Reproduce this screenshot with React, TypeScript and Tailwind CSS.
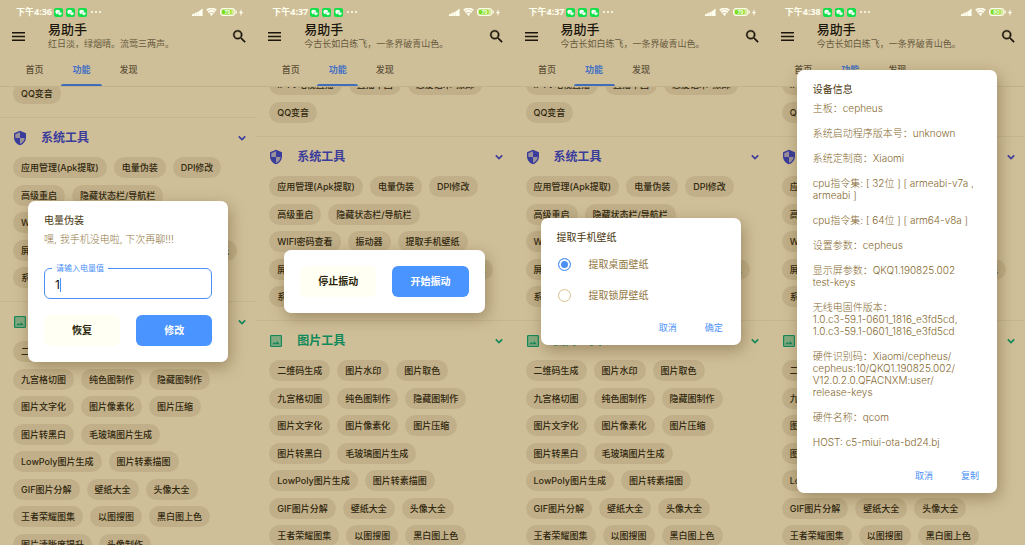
import type { ReactNode } from "react";

type Section = {
  title: string;
  tone: string;
  icon: ReactNode;
  rows: string[][];
};

const ShieldIcon = () => (
  <svg viewBox="0 0 24 24" className="size-4" fill="currentColor" aria-hidden="true">
    <path d="M12 2 4 5v6.1c0 5.05 3.41 9.76 8 10.9 4.59-1.14 8-5.85 8-10.9V5l-8-3z" opacity=".35" />
    <path d="M12 1 3 5v6c0 5.55 3.84 10.74 9 12 5.16-1.26 9-6.45 9-12V5l-9-4zm0 10.99h7c-.53 4.12-3.28 7.79-7 8.94V12H5V6.3l7-3.11v8.8z" />
  </svg>
);

const PictureIcon = () => (
  <svg viewBox="0 0 24 24" className="size-4" fill="currentColor" aria-hidden="true">
    <path d="M5 19h14V5H5v14z" opacity=".4" />
    <path d="M19 3H5a2 2 0 0 0-2 2v14a2 2 0 0 0 2 2h14a2 2 0 0 0 2-2V5a2 2 0 0 0-2-2zm0 16H5V5h14v14zm-5.04-6.71-2.75 3.54-1.96-2.36L6.5 17h11l-3.54-4.71z" />
  </svg>
);

const voiceRows = [["IPTV电视直播", "直播中国", "恋爱话术-撩妹"], ["QQ变音"]];

const sections: Section[] = [
  {
    title: "系统工具",
    tone: "text-[#3a3c9c]",
    icon: <ShieldIcon />,
    rows: [
      ["应用管理(Apk提取)", "电量伪装", "DPI修改"],
      ["高级重启", "隐藏状态栏/导航栏"],
      ["WIFI密码查看", "振动器", "提取手机壁纸"],
      ["屏幕坏点检测", "设备信息", "提取应用动态壁纸"],
      ["系统界面调节"],
    ],
  },
  {
    title: "图片工具",
    tone: "text-[#12895a]",
    icon: <PictureIcon />,
    rows: [
      ["二维码生成", "图片水印", "图片取色"],
      ["九宫格切图", "纯色图制作", "隐藏图制作"],
      ["图片文字化", "图片像素化", "图片压缩"],
      ["图片转黑白", "毛玻璃图片生成"],
      ["LowPoly图片生成", "图片转素描图"],
      ["GIF图片分解", "壁纸大全", "头像大全"],
      ["王者荣耀图集", "以图搜图", "黑白图上色"],
      ["图片清晰度提升", "头像制作"],
    ],
  },
];

const deviceInfo: string[][] = [
  ["主板：cepheus"],
  ["系统启动程序版本号：unknown"],
  ["系统定制商：Xiaomi"],
  ["cpu指令集: [ 32位 ] [ armeabi-v7a ,", "armeabi ]"],
  ["cpu指令集: [ 64位 ] [ arm64-v8a ]"],
  ["设置参数：cepheus"],
  ["显示屏参数：QKQ1.190825.002", "test-keys"],
  ["无线电固件版本：", "1.0.c3-59.1-0601_1816_e3fd5cd,", "1.0.c3-59.1-0601_1816_e3fd5cd"],
  ["硬件识别码：Xiaomi/cepheus/", "cepheus:10/QKQ1.190825.002/", "V12.0.2.0.QFACNXM:user/", "release-keys"],
  ["硬件名称：qcom"],
  ["HOST: c5-miui-ota-bd24.bj"],
];

const ChatIcon = () => (
  <svg viewBox="0 0 18 18" className="size-[9px]" aria-hidden="true">
    <rect width="18" height="18" rx="4" fill="#12e04a" />
    <ellipse cx="7.3" cy="7.4" rx="4.8" ry="4" fill="#fff" />
    <path d="M4.5 10 4 12.5l3-1.4z" fill="#fff" />
    <ellipse cx="11.8" cy="11.2" rx="4" ry="3.3" fill="#fff" stroke="#12e04a" strokeWidth=".8" />
  </svg>
);

function StatusBar({ time, charge }: { time: string; charge: string }) {
  return (
    <div className="flex h-6 items-center pr-[13px] pl-4 text-[#fffff0]">
      <span className="font-['Noto_Sans','Noto_Sans_CJK_SC',sans-serif] text-[9px] leading-3 font-bold">{time}</span>
      <span className="ml-0.5 flex gap-[3px]">
        <ChatIcon />
        <ChatIcon />
        <ChatIcon />
      </span>
      <svg viewBox="0 0 10 2" className="ml-1 h-[2px] w-[10px]" fill="currentColor" aria-hidden="true">
        <circle cx="1" cy="1" r="1" />
        <circle cx="5" cy="1" r="1" />
        <circle cx="9" cy="1" r="1" />
      </svg>
      <svg viewBox="0 0 11 8" className="ml-auto h-2 w-[11px]" fill="currentColor" aria-hidden="true">
        <path d="M0 8V6.4L2 5.6V8zM2.2 8V5.5l2-.9V8zM4.4 8V4.5l2-1V8zM6.6 8V3.4L10.6.5V8z" />
      </svg>
      <svg viewBox="0 0 24 18" className="ml-[3px] h-2 w-[11px]" fill="currentColor" aria-hidden="true">
        <path d="M12 18 7.5 12.5a7 7 0 0 1 9 0zM6.2 11 3.4 7.6a13 13 0 0 1 17.2 0L17.8 11a9.6 9.6 0 0 0-11.6 0zM2.6 6.6.1 3.6a18.5 18.5 0 0 1 23.8 0l-2.5 3a15.2 15.2 0 0 0-18.8 0z" />
      </svg>
      <svg viewBox="0 0 34 16" className="ml-[3px] h-2 w-[17px]" aria-hidden="true">
        <rect x="1" y="1" width="29" height="14" rx="5" fill="#d9e8a0" stroke="#fffff0" strokeWidth="2" />
        <rect x="4" y="3.5" width="19" height="9" rx="2" fill="#7be01e" />
        <rect x="31.5" y="5" width="2" height="6" rx="1" fill="#fffff0" />
        <text x="15" y="12" fontSize="10" fontWeight="700" textAnchor="middle" fill="#fffff0">
          {charge}
        </text>
      </svg>
      <svg viewBox="0 0 8 14" className="ml-0.5 h-[7px] w-1" fill="currentColor" aria-hidden="true">
        <path d="M5.5 0 0 8h3.2L2.5 14 8 5.8H4.8z" />
      </svg>
    </div>
  );
}

function Header({ time, charge, poem }: { time: string; charge: string; poem: string }) {
  const tabs = ["首页", "功能", "发现"];
  return (
    <header className="border-b border-[#c2b28c]">
      <StatusBar time={time} charge={charge} />
      <div className="flex h-6 items-center pr-2 pl-[10px] text-[#1b160b]">
        <button type="button" aria-label="菜单">
          <svg viewBox="0 0 17 17" className="size-[17px]" fill="currentColor" aria-hidden="true">
            <path d="M2 4h13v1.6H2zM2 7.7h13v1.6H2zM2 11.4h13V13H2z" />
          </svg>
        </button>
        <div className="ml-[21px] min-w-0 flex-1">
          <h1 className="text-[13px] leading-4 font-medium">{"易助手"}</h1>
          <p className="truncate text-[9px] leading-[14px] text-[#685b3e]">{poem}</p>
        </div>
        <button type="button" aria-label="搜索">
          <svg viewBox="0 0 24 24" className="size-[17px]" fill="currentColor" aria-hidden="true">
            <path d="M15.5 14h-.79l-.28-.27A6.47 6.47 0 0 0 16 9.5 6.5 6.5 0 1 0 9.5 16c1.61 0 3.09-.59 4.23-1.57l.27.28v.79l5 4.99L20.49 19l-4.99-5zm-6 0a4.5 4.5 0 1 1 0-9 4.5 4.5 0 0 1 0 9z" stroke="currentColor" strokeWidth=".5" />
          </svg>
        </button>
      </div>
      <nav className="flex pt-2 pl-[11px]">
        {tabs.map((tab) => (
          <a
            key={tab}
            href="#"
            className={
              tab === "功能"
                ? "flex w-[47px] flex-col items-center text-[9px] font-semibold text-[#3f6fc4]"
                : "flex w-[47px] flex-col items-center text-[9px] font-medium text-[#5c5036]"
            }
          >
            <span className="leading-7">{tab}</span>
            {tab === "功能" && <span className="h-[2px] w-[41px] rounded-t-sm bg-[#3f6db8]" />}
          </a>
        ))}
      </nav>
    </header>
  );
}

function ChipRows({ rows, height }: { rows: string[][]; height: string }) {
  return (
    <div className={`flex flex-col justify-between pl-[13px] ${height}`}>
      {rows.map((row) => (
        <div key={row[0]} className="flex gap-[7px]">
          {row.map((label) => (
            <button
              key={label}
              type="button"
              className="h-[21px] shrink-0 rounded-full bg-[#c0af88] px-2 text-[9px] leading-[21px] font-medium whitespace-nowrap text-[#30270f]"
            >
              {label}
            </button>
          ))}
        </div>
      ))}
    </div>
  );
}

function Phone({
  time,
  charge,
  poem,
  scroll,
  children,
}: {
  time: string;
  charge: string;
  poem: string;
  scroll: string;
  children: ReactNode;
}) {
  return (
    <section className="relative flex min-w-0 flex-col overflow-hidden">
      <Header time={time} charge={charge} poem={poem} />
      <div className="min-h-0 flex-1 overflow-hidden">
        <div className={scroll}>
          <ChipRows rows={voiceRows} height="h-[49px] mb-[13px]" />
          {sections.map((s, i) => (
            <div key={s.title} className="border-t border-[#c5b58f] pb-[13px]">
              <div className={`flex h-[39px] items-center pr-2 pl-3 ${s.tone}`}>
                {s.icon}
                <h2 className="ml-[13px] flex-1 text-[12px] leading-4 font-semibold">{s.title}</h2>
                <svg viewBox="0 0 12 12" className="size-3" fill="none" stroke="currentColor" strokeWidth="1.6" aria-hidden="true">
                  <path d="m2.8 4.4 3.2 3.2 3.2-3.2" />
                </svg>
              </div>
              <ChipRows rows={s.rows} height={i === 0 ? "h-[131px]" : "h-[214px]"} />
            </div>
          ))}
        </div>
      </div>
      <div className="absolute inset-0 flex items-center px-7 pt-[18px]">
        <div
          role="dialog"
          className="w-full rounded-[7px] bg-white px-4 shadow-[2px_5px_16px_rgba(80,60,20,0.4)]"
        >
          {children}
        </div>
      </div>
    </section>
  );
}

function ButtonPair({ left, right }: { left: string; right: string }) {
  return (
    <div className="flex gap-4">
      <button type="button" className="h-[31px] flex-1 rounded-md bg-[#fffff4] text-[10px] font-bold text-[#2a1f08]">
        {left}
      </button>
      <button type="button" className="h-[31px] flex-1 rounded-md bg-[#4a94ff] text-[10px] font-bold text-white">
        {right}
      </button>
    </div>
  );
}

function TextActions({ labels }: { labels: string[] }) {
  return (
    <div className="flex justify-end gap-7 pr-0.5">
      {labels.map((label) => (
        <button key={label} type="button" className="text-[9px] leading-4 text-[#4a90f5]">
          {label}
        </button>
      ))}
    </div>
  );
}

function DialogTitle({ children }: { children: ReactNode }) {
  return <h3 className="text-[10px] leading-4 text-[#4a3810]">{children}</h3>;
}

export default function App() {
  const river = "今古长如白练飞，一条界破青山色。";
  return (
    <main className="grid h-screen grid-cols-4 grid-rows-1 overflow-hidden bg-[#cfbf99] font-['Inter','Noto_Sans_CJK_SC',sans-serif]">
      <Phone time="下午4:36" charge="79" poem="红日淡，绿烟晴。流莺三两声。" scroll="-mt-8">
        <div className="pt-[11px] pb-4">
          <DialogTitle>{"电量伪装"}</DialogTitle>
          <p className="mt-1 text-[10px] leading-[14px] font-light text-[#927843]">{"嘿, 我手机没电啦, 下次再聊!!!"}</p>
          <fieldset className="mt-[17px] mb-4 h-9 rounded-md border border-[#4a90f5] px-[7px]">
            <legend className="px-1 text-[8px] leading-[10px] text-[#4a90f5]">
              <label htmlFor="battery">{"请输入电量值"}</label>
            </legend>
            <div className="flex h-6 items-center pl-[3px]">
              <input
                id="battery"
                type="text"
                defaultValue="1"
                className="h-4 w-[5px] bg-transparent text-[12px] leading-4 text-[#111] outline-none"
              />
              <span className="h-[14px] w-px bg-[#4a90f5]" />
            </div>
          </fieldset>
          <ButtonPair left="恢复" right="修改" />
        </div>
      </Phone>

      <Phone time="下午4:37" charge="79" poem={river} scroll="-mt-[13px]">
        <div className="py-4">
          <ButtonPair left="停止振动" right="开始振动" />
        </div>
      </Phone>

      <Phone time="下午4:37" charge="79" poem={river} scroll="-mt-[13px]">
        <div className="pt-[11px] pb-[9px]">
          <DialogTitle>{"提取手机壁纸"}</DialogTitle>
          <div className="mt-1 mb-[9px]">
            {["提取桌面壁纸", "提取锁屏壁纸"].map((label, i) => (
              <label key={label} className="flex h-[31px] items-center gap-[18px] pl-px text-[10px] text-[#927843]">
                <input
                  type="radio"
                  name="wallpaper"
                  defaultChecked={i === 0}
                  className="size-[13px] appearance-none rounded-full border border-[#d8c08c] checked:border-[#4a90f5] checked:bg-[#4a90f5] checked:shadow-[inset_0_0_0_2px_white]"
                />
                {label}
              </label>
            ))}
          </div>
          <TextActions labels={["取消", "确定"]} />
        </div>
      </Phone>

      <Phone time="下午4:38" charge="80" poem={river} scroll="-mt-[13px]">
        <div className="pt-[11px] pb-[9px]">
          <DialogTitle>{"设备信息"}</DialogTitle>
          <div className="mt-[5px] mb-5 flex flex-col gap-[13px] text-[10px] leading-3 font-light text-[#85692f]">
            {deviceInfo.map((lines) => (
              <p key={lines[0]}>
                {lines.map((line) => (
                  <span key={line} className="block whitespace-nowrap">
                    {line}
                  </span>
                ))}
              </p>
            ))}
          </div>
          <TextActions labels={["取消", "复制"]} />
        </div>
      </Phone>
    </main>
  );
}
